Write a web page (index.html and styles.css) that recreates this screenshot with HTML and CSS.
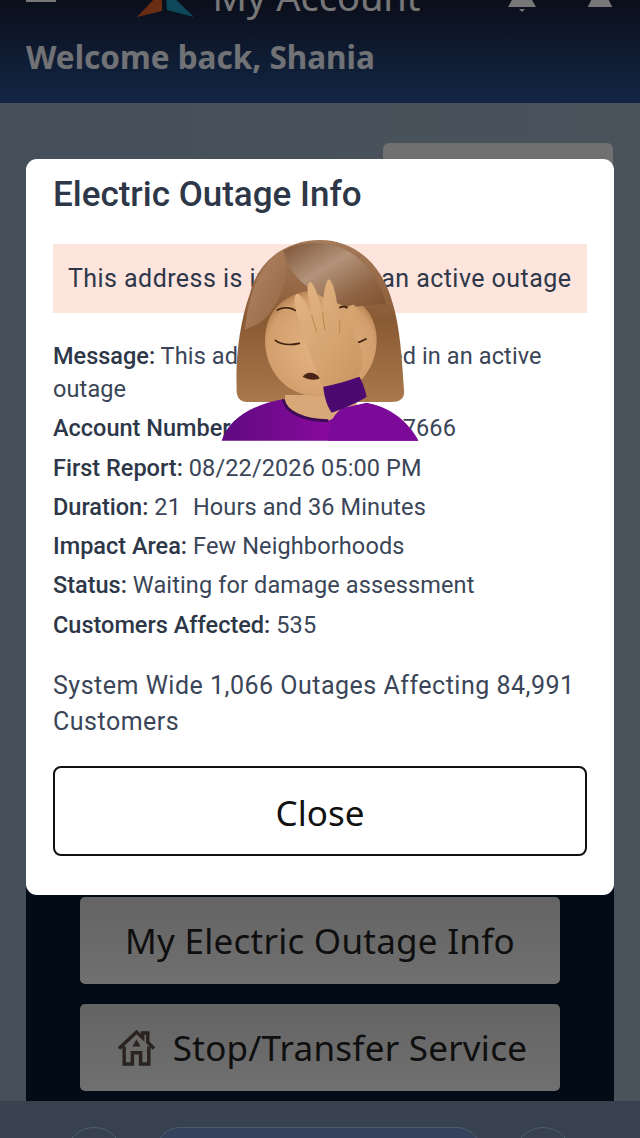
FILE: index.html
```html
<!DOCTYPE html>
<html lang="en">
<head>
  <meta charset="utf-8">
  <meta name="viewport" content="width=device-width,initial-scale=1">
  <title>My Account</title>
  <link rel="stylesheet" href="styles.css">
</head>
<body>

<div class="app">
  <header class="top">
    <div class="topbar">
      <span class="burger"></span>
      <div class="brand">
        <svg class="logo" viewBox="0 0 57 24">
          <path d="M0 21 L20 0 L25 0 L25 15 Z" fill="#e0612c"/>
          <path d="M29 0 L35 0 L57 21 L30 14 Z" fill="#1f9cc4"/>
        </svg>
        <span class="brand-name">My Account</span>
      </div>
      <div class="top-icons">
        <svg class="bell" viewBox="0 0 28 12"><path d="M4 0 H24 L28 7 H0 Z M11 9 H17 L14 12 Z" fill="#fff"/></svg>
        <svg class="person" viewBox="0 0 28 8"><path d="M4 0 H24 L28 8 H0 Z" fill="#fff"/></svg>
      </div>
    </div>
    <h1 class="welcome">Welcome back, Shania</h1>
  </header>

  <main class="page">
    <div class="tab-row"><div class="tab"></div></div>
    <div class="panel">
      <a class="big-btn">My Electric Outage Info</a>
      <a class="big-btn">
        <svg class="house" viewBox="0 0 36 36">
          <path d="M1 19 L18 3 L24 8.500 V4 H29 V13 L35 19 M6 17 V34 H14 V23 H22 V34 H30 V17" fill="none" stroke="#5c4c44" stroke-width="3.400"/>
          <path d="M18 10 L22 17 H14 Z" fill="#5c4c44"/>
        </svg>
        Stop/Transfer Service
      </a>
    </div>
  </main>

  <footer class="bottom">
    <span class="nav-round"></span>
    <span class="nav-pill"></span>
    <span class="nav-round"></span>
  </footer>
</div>

<div class="scrim"></div>

<section class="modal">
  <h2>Electric Outage Info</h2>
  <div class="alert">This address is included in an active outage</div>
  <dl class="facts">
    <div class="fact"><b>Message:</b> This address is included in an active outage</div>
    <div class="fact"><b>Account Number:</b> 1004855700017666</div>
    <div class="fact"><b>First Report:</b> 08/22/2026 05:00 PM</div>
    <div class="fact"><b>Duration:</b> 21&nbsp; Hours and 36 Minutes</div>
    <div class="fact"><b>Impact Area:</b> Few Neighborhoods</div>
    <div class="fact"><b>Status:</b> Waiting for damage assessment</div>
    <div class="fact"><b>Customers Affected:</b> 535</div>
  </dl>
  <p class="system">System Wide 1,066 Outages Affecting 84,991 Customers</p>
  <button class="close">Close</button>
</section>

<!-- sticker on top of the screenshot -->
<svg class="sticker" viewBox="0 0 720 660">
  <defs>
    <linearGradient id="hair" x1="0" y1="0" x2="0" y2="1">
      <stop offset="0" stop-color="#a57a5a"/>
      <stop offset=".5" stop-color="#8a5a34"/>
      <stop offset="1" stop-color="#a9784c"/>
    </linearGradient>
    <linearGradient id="fringe" x1="0" y1="0" x2="1" y2="1">
      <stop offset="0" stop-color="#7c5236"/>
      <stop offset=".4" stop-color="#b3937a"/>
      <stop offset=".75" stop-color="#8e6444"/>
      <stop offset="1" stop-color="#80532f"/>
    </linearGradient>
    <linearGradient id="side" x1="0" y1="0" x2="1" y2="1">
      <stop offset="0" stop-color="#b38a6a"/>
      <stop offset="1" stop-color="#94643f"/>
    </linearGradient>
    <radialGradient id="skin" cx=".5" cy=".55" r=".6">
      <stop offset="0" stop-color="#e6b585"/>
      <stop offset=".8" stop-color="#d29f6c"/>
      <stop offset="1" stop-color="#a87448"/>
    </radialGradient>
    <linearGradient id="palm" x1="0" y1="0" x2="1" y2="1">
      <stop offset="0" stop-color="#e4b785"/>
      <stop offset="1" stop-color="#c9955f"/>
    </linearGradient>
    <linearGradient id="shirt" x1="0" y1="0" x2="1" y2="0">
      <stop offset="0" stop-color="#5e0a80"/>
      <stop offset=".6" stop-color="#8c0aa0"/>
      <stop offset="1" stop-color="#7a0a98"/>
    </linearGradient>
  </defs>
  <path d="M360 30 C470 30 550 110 578 220 C600 290 606 390 612 480 C615 505 600 516 575 516 L140 516 C118 516 108 500 110 475 C106 390 118 280 150 190 C175 90 260 30 360 30 Z" fill="url(#hair)"/>
  <path d="M255 495 L470 495 L470 590 L255 575 Z" fill="#d8a878"/>
  <path d="M65 632 C85 570 150 525 250 508 C255 545 310 572 385 572 L500 520 C570 530 625 575 655 632 Z" fill="url(#shirt)"/>
  <path d="M250 508 C255 545 310 572 385 572" fill="none" stroke="#3d0a55" stroke-width="9"/>
  <path d="M362 500 C255 500 195 420 195 330 C195 240 260 180 360 180 C460 180 530 240 530 330 C530 420 465 500 362 500 Z" fill="url(#skin)"/>
  <path d="M250 62 C300 30 420 22 490 100 C530 140 552 185 558 225 C520 215 470 240 425 225 C340 195 265 140 250 62 Z" fill="url(#fringe)"/>
  <path d="M250 62 C270 120 255 190 205 255 C180 285 150 290 135 300 C145 180 190 90 250 62 Z" fill="url(#side)"/>
  <path d="M232 240 C250 230 272 232 288 242 M226 331 C245 345 275 345 298 340 M462 340 C475 338 488 333 498 327" fill="none" stroke="#3f2212" stroke-width="5" stroke-linecap="round"/>
  <path d="M420 232 C430 228 440 230 446 238" fill="none" stroke="#3f2212" stroke-width="6" stroke-linecap="round"/>
  <path d="M308 440 C320 425 340 422 362 445 C345 452 325 450 308 440 Z" fill="#4a2418"/>
  <path d="M372 475 C345 420 318 340 300 280 C290 250 276 210 288 193 C302 186 320 225 335 255 C330 215 315 170 328 157 C342 152 358 210 368 245 C370 210 372 160 386 148 C402 153 412 215 418 270 C430 255 445 220 462 225 C476 232 464 290 462 320 C500 360 492 425 465 448 Z" fill="url(#palm)"/>
  <path d="M335 255 C340 275 345 290 350 305 M368 245 C370 270 372 285 375 300 M418 270 C420 285 420 295 418 310" fill="none" stroke="#b98650" stroke-width="3"/>
  <path d="M500 518 C560 530 625 575 655 632 L385 632 C382 590 395 560 425 535 Z" fill="#7c0a98"/>
  <path d="M370 470 C400 465 450 450 478 440 C490 460 497 485 500 500 C470 520 420 540 395 548 C382 530 372 500 370 470 Z" fill="#4a0a70"/>
</svg>

</body>
</html>
```

FILE: styles.css
```css
* {box-sizing:border-box}
html, body {margin:0;height:1138px;overflow:hidden}
body {font-family:Roboto, sans-serif;background:#94aac0;color:#2d3748}

.app {height:1138px;display:flex;flex-direction:column;font-family:"Noto Sans", sans-serif}

/* header */
.top {height:103px;background:linear-gradient(#18203a, #285294);overflow:hidden;padding:0 26px}
.topbar {height:30px;margin-top:-10px;display:flex;align-items:flex-end;justify-content:space-between;position:relative}
.burger {width:30px;height:13px;border-bottom:3px solid #fff;margin-bottom:18px}
.brand {display:flex;align-items:flex-end;gap:18px;margin-right:6px}
.logo {width:57px;height:24px}
.brand-name {font-size:38px;line-height:36px;color:#fff;margin-bottom:6px}
.top-icons {display:flex;gap:50px;align-items:flex-start;margin-top:10px;margin-bottom:auto}
.bell {width:28px;height:12px}
.person {width:28px;height:7px}
.welcome {margin:17px 0 0;font-size:31.500px;line-height:40px;font-weight:700;color:#f0f4fa}

/* page under the dialog */
.page {flex:1;padding:40px 26px 0;display:flex;flex-direction:column;background:linear-gradient(90deg, #94aac0, #9fb2c6)}
.tab-row {display:flex;justify-content:flex-end;flex:1}
.tab {width:230px;height:60px;background:#f0f0f0;border-radius:6px;margin-right:1px}
.panel {height:220px;background:#061a30;display:flex;flex-direction:column;align-items:center;gap:20px;padding:16px 0 0;flex:none}
.big-btn {width:480px;height:87px;flex:none;border-radius:5px;background:linear-gradient(#d6d6d6, #f0f0f0);
          display:flex;align-items:center;justify-content:center;gap:18px;font-size:35px;letter-spacing:.25px;color:#222}
.house {width:37px;height:37px;margin-left:5px}

.bottom {height:37px;background:#768cac;display:flex;justify-content:center;gap:33px;padding:26px 4px 0 0;overflow:hidden;flex:none}
.nav-round {width:58px;height:58px;border-radius:50%;border:1px solid #a8c4ec;flex:none}
.nav-pill {width:325px;height:50px;border-radius:24px;border:1px solid #a8c4ec;background:#6f90c4;flex:none}

/* dialog */
.scrim {position:fixed;inset:0;background:#0008}
.modal {position:fixed;left:26px;top:159px;width:588px;height:736px;background:#fff;border-radius:11px;padding:16px 27px 0}
.modal h2 {margin:0;font-size:35px;line-height:40px;font-weight:500;color:#2d3748}
.alert {margin-top:29px;height:69px;background:#fde5de;padding:0 15px;display:flex;align-items:center;
        font-size:25px;letter-spacing:.44px;white-space:nowrap}
.facts {margin:27px 0 0}
.fact {font-size:23.500px;line-height:33px;margin-bottom:6.300px;letter-spacing:.12px;color:#3a4557}
.fact b {font-weight:500;color:#2d3748;letter-spacing:0}
.system {margin:26px 0 0;font-size:25px;line-height:36px;letter-spacing:.5px;color:#3a4557}
.close {display:block;width:100%;height:90px;margin-top:26px;padding-top:4px;background:#fff;border:2px solid #111;border-radius:8px;
        font:400 35px "Noto Sans", sans-serif;color:#111}

.sticker {position:fixed;left:200px;top:230px;width:240px;height:220px}
```
